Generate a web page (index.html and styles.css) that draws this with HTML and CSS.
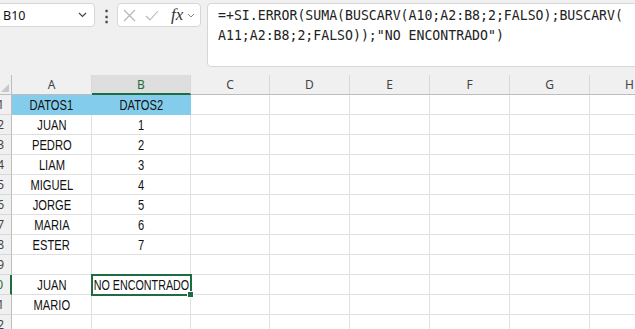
FILE: index.html
```html
<!DOCTYPE html>
<html lang="es">
<head>
    <meta charset="UTF-8">
    <meta name="viewport" content="width=device-width, initial-scale=1.0">
    <title>Hoja de cálculo</title>
    <link rel="stylesheet" href="styles.css">
</head>
<body>
    <div class="toolbar">
        <div class="name-box">
            <span>B10</span>
            <svg class="chevron" width="9" height="6" viewBox="0 0 9 6"><path d="M1 1l3.5 3.5L8 1" fill="none" stroke="#444" stroke-width="1.2"/></svg>
        </div>
        <div class="dots">&#8942;</div>
        <div class="fx-box">
            <svg width="13" height="13" viewBox="0 0 13 13"><path d="M1 1l11 11M12 1L1 12" stroke="#b5b5b5" stroke-width="1.1"/></svg>
            <svg width="14" height="11" viewBox="0 0 14 11"><path d="M1 6l4 4 8-9" fill="none" stroke="#b5b5b5" stroke-width="1.1"/></svg>
            <span class="fx">fx</span>
            <svg width="8" height="5" viewBox="0 0 8 5"><path d="M1 1l3 3 3-3" fill="none" stroke="#888" stroke-width="1"/></svg>
        </div>
        <div class="formula">=+SI.ERROR(SUMA(BUSCARV(A10;A2:B8;2;FALSO);BUSCARV(<br>A11;A2:B8;2;FALSO));"NO ENCONTRADO")</div>
    </div>

    <div class="sheet">
        <div class="corner"><span class="tri"></span></div>
        <div class="col-head">A</div>
        <div class="col-head active">B</div>
        <div class="col-head">C</div>
        <div class="col-head">D</div>
        <div class="col-head">E</div>
        <div class="col-head">F</div>
        <div class="col-head">G</div>
        <div class="col-head last">H</div>
    </div>
    <div id="rows"></div>

    <script>
        const data = [
            ['DATOS1', 'DATOS2'],
            ['JUAN', '1'],
            ['PEDRO', '2'],
            ['LIAM', '3'],
            ['MIGUEL', '4'],
            ['JORGE', '5'],
            ['MARIA', '6'],
            ['ESTER', '7'],
            ['', ''],
            ['JUAN', 'NO ENCONTRADO'],
            ['MARIO', ''],
            ['', '']
        ];
        const rows = document.getElementById('rows');
        data.forEach((row, i) => {
            const n = i + 1;
            let html = `<div class="row-head${n === 10 ? ' active' : ''}"><span>${n}</span></div>`;
            html += `<div class="cell${n === 1 ? ' blue' : ''}"><span>${row[0]}</span></div>`;
            html += `<div class="cell${n === 1 ? ' blue' : ''}${n === 10 ? ' selected' : ''}"><span>${row[1]}</span></div>`;
            for (let c = 0; c < 6; c++) {
                html += '<div class="cell"></div>';
            }
            const line = document.createElement('div');
            line.className = 'sheet';
            line.innerHTML = html;
            rows.appendChild(line);
        });
    </script>
</body>
</html>
```

FILE: styles.css
```css
body {
    margin: 0;
    background: #fff;
    font-family: "Noto Sans", "Liberation Sans", sans-serif;
    color: #222;
    overflow: hidden;
}
.toolbar {
    display: flex;
    align-items: flex-start;
    height: 75px;
    padding-top: 3px;
    box-sizing: border-box;
    background: #f0f0f0;
}
.name-box {
    display: flex;
    align-items: center;
    justify-content: space-between;
    width: 101px;
    height: 24px;
    margin-left: -6px;
    padding: 0 7px 0 8px;
    box-sizing: border-box;
    background: #fff;
    border: 1px solid #d6d6d6;
    border-radius: 4px;
    font-size: 12.5px;
    color: #111;
}
.dots {
    width: 22px;
    text-align: center;
    line-height: 24px;
    font-size: 15px;
    font-weight: bold;
    color: #444;
}
.fx-box {
    display: flex;
    align-items: center;
    gap: 9px;
    width: 84px;
    height: 24px;
    padding-left: 5px;
    box-sizing: border-box;
    background: #fff;
    border: 1px solid #d6d6d6;
    border-radius: 4px;
}
.fx-box .fx {
    font-family: "Liberation Serif", serif;
    font-style: italic;
    font-size: 17px;
    color: #333;
    margin-left: 3px;
    margin-right: -5px;
}
.formula {
    flex: 1;
    height: 64px;
    margin-left: 6px;
    margin-right: -20px;
    padding: 2px 10px;
    box-sizing: border-box;
    background: #fff;
    border: 1px solid #d6d6d6;
    border-radius: 4px;
    font-family: "DejaVu Sans Mono", "Liberation Mono", monospace;
    font-size: 13.2px;
    line-height: 20px;
    color: #222;
    white-space: nowrap;
}
.sheet {
    display: grid;
    grid-template-columns: 12px 80px 99px 79px 80px 80px 80px 80px 80px;
}
.corner,
.col-head {
    height: 20px;
    box-sizing: border-box;
    background: #f0f0f0;
    border-bottom: 1px solid #bdbdbd;
}
.corner {
    position: relative;
    border-right: 1px solid #bdbdbd;
}
.corner .tri {
    position: absolute;
    right: 2px;
    bottom: 2px;
    border-style: solid;
    border-width: 0 0 8px 8px;
    border-color: transparent transparent #c8c8c8 transparent;
}
.col-head {
    border-right: 1px solid #d8d8d8;
    text-align: center;
    font-size: 12px;
    line-height: 19px;
    color: #444;
}
.col-head.active {
    background: #dedede;
    border-bottom: 2px solid #1e6c41;
    color: #1e6c41;
}
.row-head {
    display: flex;
    justify-content: flex-end;
    overflow: hidden;
    height: 20px;
    padding-right: 7px;
    box-sizing: border-box;
    background: #f0f0f0;
    border-right: 1px solid #bdbdbd;
    border-bottom: 1px solid #d8d8d8;
    font-size: 12px;
    line-height: 19px;
    color: #444;
}
.row-head span {
    flex-shrink: 0;
}
.row-head.active {
    border-right: 2px solid #1e6c41;
    color: #1e6c41;
}
.cell {
    position: relative;
    display: flex;
    justify-content: center;
    height: 20px;
    box-sizing: border-box;
    border-right: 1px solid #e0e0e0;
    border-bottom: 1px solid #e0e0e0;
    font-family: "Liberation Sans", sans-serif;
    font-size: 14.5px;
    line-height: 21px;
    color: #111;
    white-space: nowrap;
}
/* no narrow face installed, so squeeze the regular one */
.cell span {
    flex-shrink: 0;
    display: inline-block;
    transform: scaleX(0.77);
}
.cell.blue {
    background: #83cceb;
    border-right-color: #83cceb;
    border-bottom-color: #83cceb;
}
.cell.selected {
    outline: 2px solid #1e6c41;
    outline-offset: -1px;
    z-index: 1;
}
.cell.selected span {
    transform: scaleX(0.74);
}
.cell.selected::after {
    content: "";
    position: absolute;
    right: -4px;
    bottom: -4px;
    width: 5px;
    height: 5px;
    background: #1e6c41;
    border: 1px solid #fff;
}
```
